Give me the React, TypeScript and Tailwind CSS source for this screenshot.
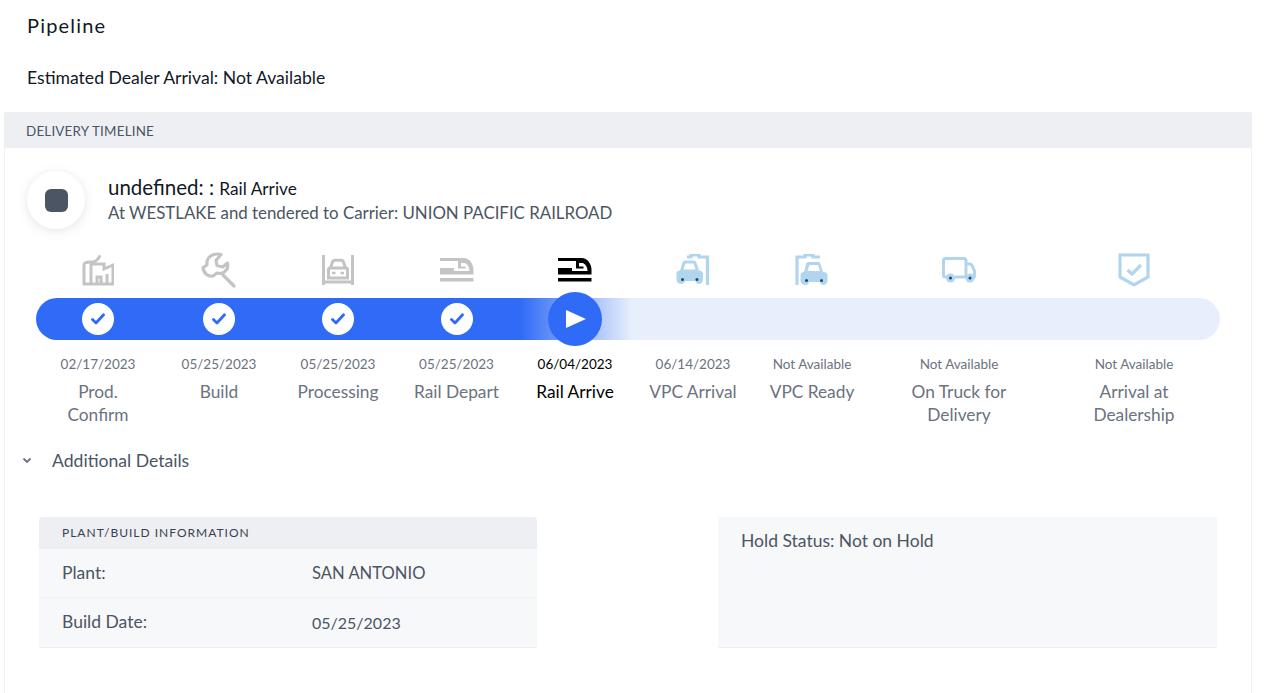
import { ReactNode } from 'react';

const GRAY = '#c4c4c4';
const BLUE = '#b2d5ee';
const DOT = '#17497a';

const FactoryIcon = () => (
  <svg width="32" height="32" viewBox="0 0 32 32" fill="none" stroke={GRAY} strokeWidth="3">
    <path d="M2 30V11C2 8.500 4 8 8 8C13 8 15 7 17.500 2.500" strokeLinecap="round" />
    <path d="M2 30H31V11L22 15V10L9 10V30" />
    <path d="M15 30V23H19V30M25 20V30" />
  </svg>
);

const WrenchIcon = () => (
  <svg width="36" height="36" viewBox="0 0 36 36" fill="none" stroke={GRAY} strokeWidth="3.2" strokeLinejoin="round" strokeLinecap="round">
    <path d="M20 2.500C12 0.500 5 5 6 13L2 15.500C2.500 21 7 25 12 24L16 21C22 23 28 18 26.500 11L21.500 15L16 13.500L15 8.500Z" />
    <path d="M22 23L33 34" />
  </svg>
);

const GarageIcon = () => (
  <svg width="32" height="32" viewBox="0 0 32 32" fill="none" stroke={GRAY}>
    <path d="M1.500 1V31M30.500 1V31M1.500 28H30.500" strokeWidth="3" />
    <path d="M8.500 14L10.500 8C10.900 6.800 11.600 6.300 13 6.300H19C20.400 6.300 21.100 6.800 21.500 8L23.500 14" strokeWidth="3" />
    <path d="M6.500 15.500C6.500 14.500 7 14 8 14H24C25 14 25.500 14.500 25.500 15.500V24H6.500Z" strokeWidth="3" />
    <path d="M10 19H13.500M18.500 19H22" strokeWidth="2.400" />
  </svg>
);

const RailIcon = ({ color }: { color: string }) => (
  <svg width="34" height="24" viewBox="0 0 34 24" fill={color}>
    <path d="M0 0H24C29 0 33 5 33.500 11V16.500H0V10H14V13H29.500C29.500 9 27.500 6.500 25 5L21 5V8.500H25.500V10.500H18V3H0Z" />
    <rect x="0" y="20" width="33.500" height="3.500" />
  </svg>
);

const VpcArrivalIcon = () => (
  <svg width="34" height="32" viewBox="0 0 34 32" fill="none">
    <path d="M11 3H15V1H23V3H31.500V31" stroke={BLUE} strokeWidth="3.200" />
    <path d="M0.500 19.500C0.500 17.500 2 16.500 4 16.500L6.500 8.500C6.900 7.300 7.700 6.500 9 6.500H18C19.300 6.500 20.100 7.300 20.500 8.500L23 16.500C25 16.500 27 17.500 27 19.500V25.500C27 28 25 30 23 30C21 30 19.500 28.500 19.500 27H9C9 28.500 7 30 5 30C2.500 30 0.500 28 0.500 25.500Z" fill={BLUE} />
    <path d="M7.500 15.500L9.500 9.500H17.500L19.500 15.500Z" fill="#fff" />
    <circle cx="6.500" cy="25.500" r="1.500" fill={DOT} />
    <circle cx="21" cy="25.500" r="1.500" fill={DOT} />
  </svg>
);

const VpcReadyIcon = () => (
  <svg width="34" height="32" viewBox="0 0 34 32" fill="none">
    <path d="M2 31V3H10V1H18V3H25" stroke={BLUE} strokeWidth="3.200" />
    <path d="M5.500 21C5.500 19 7 18 9 18L11 10C11.400 8.800 12.200 8 13.500 8H23C24.300 8 25.100 8.800 25.500 10L28 18C30 18 32.500 19 32.500 21V26.500C32.500 29 30.500 31 28.500 31C26.500 31 25 29.500 25 28H14C14 29.500 12.500 31 10.500 31C8 31 5.500 29 5.500 26.500Z" fill={BLUE} />
    <path d="M12.500 17L14.500 11H23L25 17Z" fill="#fff" />
    <circle cx="11.500" cy="26.500" r="1.500" fill={DOT} />
    <circle cx="26.500" cy="26.500" r="1.500" fill={DOT} />
  </svg>
);

const TruckIcon = () => (
  <svg width="34" height="26" viewBox="0 0 34 26" fill="none">
    <path d="M7 20H3.500C2.300 20 1.500 19.200 1.500 18V3.500C1.500 2.300 2.300 1.500 3.500 1.500H22C23.200 1.500 24 2.300 24 3.500V20H13" stroke={BLUE} strokeWidth="3" />
    <path d="M24 7H28C29 7 29.500 7.500 30 8.500L32.500 14V19C32.500 20 32 20.500 31 20.500H29" stroke={BLUE} strokeWidth="3" />
    <path d="M24 20H27" stroke={BLUE} strokeWidth="3" />
    <path d="M26 10H27.500L29.500 14H26Z" fill="#fff" />
    <circle cx="8.500" cy="21" r="4.500" fill={BLUE} />
    <circle cx="28" cy="21" r="4.500" fill={BLUE} />
    <circle cx="8.500" cy="21" r="1.500" fill={DOT} />
    <circle cx="28" cy="21" r="1.500" fill={DOT} />
  </svg>
);

const ShieldIcon = () => (
  <svg width="32" height="34" viewBox="0 0 32 34" fill="none" stroke={BLUE}>
    <path d="M2 2H30V24L16 32L2 24Z" strokeWidth="3.200" />
    <path d="M9.500 17L14 21L23 12" strokeWidth="3.200" />
  </svg>
);

const CheckDot = () => (
  <div className="w-8 h-8 rounded-full bg-white flex items-center justify-center">
    <svg width="14" height="12" viewBox="0 0 14 12" fill="none" stroke="#2f6bf6" strokeWidth="2.800" strokeLinecap="round" strokeLinejoin="round">
      <path d="M1.500 6.500L5 10L12.500 1.800" />
    </svg>
  </div>
);

const PlayDot = () => (
  <div className="w-[54px] h-[54px] rounded-full bg-[#2f6bf6] flex items-center justify-center -my-2">
    <svg width="22" height="18" viewBox="0 0 22 18" className="ml-0.5">
      <path d="M1 0L21 9L1 18Z" fill="#fff" />
    </svg>
  </div>
);

type Step = {
  icon: ReactNode;
  date: string;
  label: ReactNode;
  state: 'done' | 'current' | 'next';
};

const STEPS: Step[] = [
  { icon: <FactoryIcon />,   date: '02/17/2023',    label: <>Prod.<br />Confirm</>,          state: 'done' },
  { icon: <WrenchIcon />,    date: '05/25/2023',    label: 'Build',                          state: 'done' },
  { icon: <GarageIcon />,    date: '05/25/2023',    label: 'Processing',                     state: 'done' },
  { icon: <RailIcon color={GRAY} />,    date: '05/25/2023', label: 'Rail Depart',            state: 'done' },
  { icon: <RailIcon color="#000000" />, date: '06/04/2023', label: 'Rail Arrive',            state: 'current' },
  { icon: <VpcArrivalIcon />, date: '06/14/2023',   label: 'VPC Arrival',                    state: 'next' },
  { icon: <VpcReadyIcon />,  date: 'Not Available', label: 'VPC Ready',                      state: 'next' },
  { icon: <TruckIcon />,     date: 'Not Available', label: <>On Truck for<br />Delivery</>,  state: 'next' },
  { icon: <ShieldIcon />,    date: 'Not Available', label: <>Arrival at<br />Dealership</>,  state: 'next' },
];

const COLS = 'grid grid-cols-[120px_122px_116px_121px_116px_120px_118px_176px_174px]';

export default function App() {
  return (
    <div className="h-screen overflow-hidden bg-white text-[#1f2937] font-['Lato','Noto_Sans',sans-serif]">
      <div className="pl-[27px] pt-[13px] h-[112px]">
        <h1 className="text-[20px] leading-[24px] tracking-[1.2px] text-[#111827]">Pipeline</h1>
        <p className="mt-[29px] text-[17.6px] leading-[24px] text-[#111827]">Estimated Dealer Arrival: Not Available</p>
      </div>

      <div className="ml-1 w-[1248px] border-x border-[#f1f2f5] h-[600px]">
        <div className="-mx-px h-9 bg-[#eeeff3] rounded-t flex items-center pl-[22px] pt-[2px] text-[13.4px] tracking-[0.2px] text-[#4b5563]">
          DELIVERY TIMELINE
        </div>

        <div className="flex items-center pl-[22px] pt-[23px]">
          <div className="w-[58px] h-[58px] rounded-full bg-white shadow-[0_2px_12px_rgba(0,0,0,0.1)] flex items-center justify-center">
            <div className="w-[23px] h-[23px] rounded-md bg-[#4b5563]" />
          </div>
          <div className="ml-[23px]">
            <div className="text-[20.5px] leading-[25px] text-[#111827]">
              undefined: : <span className="text-[17.3px]">Rail Arrive</span>
            </div>
            <div className="text-[16.85px] leading-[24px] text-[#4b5563]">At WESTLAKE and tendered to Carrier: UNION PACIFIC RAILROAD</div>
          </div>
        </div>

        <div className={`${COLS} ml-[33px] mt-[22px] h-[37px]`}>
          {STEPS.map((s, i) => (
            <div key={i} className="flex items-center justify-center">{s.icon}</div>
          ))}
        </div>

        <div className="ml-[31px] mt-[10px] w-[1184px] h-[42px] rounded-full bg-[linear-gradient(90deg,#2f6bf6_484px,#e8effc_596px)]">
          <div className={`${COLS} ml-[2px] h-full`}>
            {STEPS.map((s, i) => (
              <div key={i} className="flex items-center justify-center">
                {s.state === 'done' && <CheckDot />}
                {s.state === 'current' && <PlayDot />}
              </div>
            ))}
          </div>
        </div>

        <div className={`${COLS} ml-[33px] mt-[14px]`}>
          {STEPS.map((s, i) => (
            <div key={i} className={`text-center ${s.state === 'current' ? 'text-black' : 'text-[#6b7280]'}`}>
              <div className="text-[13.5px] leading-[20px]">{s.date}</div>
              <div className="mt-[6px] text-[17.3px] leading-[23px]">{s.label}</div>
            </div>
          ))}
        </div>

        <div className="flex items-center pl-[17px] mt-[23px] h-6">
          <svg width="10" height="8" viewBox="0 0 10 8" fill="none" stroke="#6b7280" strokeWidth="1.8">
            <path d="M1.500 1.500L5 5L8.500 1.500" />
          </svg>
          <span className="ml-[20px] text-[17.6px] text-[#4b5563]">Additional Details</span>
        </div>

        <div className="flex pl-[34px] mt-[44px]">
          <div className="w-[498px]">
            <div className="h-[32px] bg-[#eeeff3] rounded-t flex items-center pl-[23px] text-xs tracking-[1px] text-[#374151]">
              PLANT/BUILD INFORMATION
            </div>
            <div className="h-[49px] bg-[#f7f8fa] border-b border-[#f1f2f5] flex items-center pl-[23px] text-[#4b5563]">
              <span className="w-[250px] text-[17.5px]">Plant:</span>
              <span className="text-[16.6px]">SAN ANTONIO</span>
            </div>
            <div className="h-[50px] bg-[#f7f8fa] border-b border-[#eeeff3] flex items-center pl-[23px] text-[#4b5563]">
              <span className="w-[250px] text-[17.5px]">Build Date:</span>
              <span className="text-base">05/25/2023</span>
            </div>
          </div>
          <div className="ml-[181px] w-[499px] h-[131px] bg-[#f7f8fa] border-b border-[#eeeff3] pl-[23px] pt-[12px] text-[17.5px] leading-[24px] text-[#4b5563]">
            Hold Status: Not on Hold
          </div>
        </div>
      </div>
    </div>
  );
}
